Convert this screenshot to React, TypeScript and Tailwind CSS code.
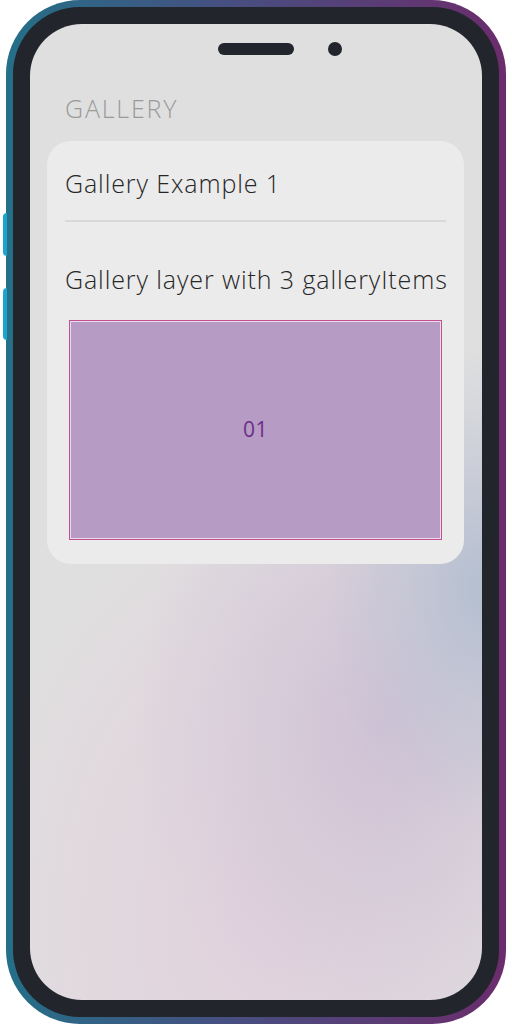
import React from "react";

const items = ["01"];

const Notch = () => (
  <div className="grid grid-cols-[1fr_auto_1fr] items-center pt-[18px]">
    <div />
    <div className="h-[12px] w-[76px] rounded-full bg-[#22252c]" />
    <div className="pl-[34px]">
      <div className="h-[14px] w-[14px] rounded-full bg-[#22252c]" />
    </div>
  </div>
);

const GalleryCard = () => (
  <div className="mx-[17px] mr-[18px] mt-[17px] rounded-[24px] bg-[#ebebeb] px-[18px] pb-[24px]">
    <div className="border-b-2 border-[#d9d9d9] pt-[26px] pb-[21px] text-[25px] font-light leading-[32px] tracking-[0.9px] text-[#262626]">
      Gallery Example 1
    </div>
    <div className="pt-[41px] pb-[25px] text-[25px] font-light leading-[32px] tracking-[0.9px] text-[#262626] whitespace-nowrap">
      Gallery layer with 3 galleryItems
    </div>
    <div className="mx-[4px] border border-[#c2508f] bg-[#eadcec] p-px">
      {items.map((item) => (
        <div
          key={item}
          className="flex h-[216px] items-center justify-center bg-[#b69bc4] text-[21px] tracking-[0.5px] text-[#6a2e8a]"
        >
          {item}
        </div>
      ))}
    </div>
  </div>
);

export default function App() {
  return (
    <div
      className="w-[512px] h-[1024px] bg-white"
      style={{ fontFamily: "'Open Sans', 'Noto Sans', sans-serif" }}
    >
      <div className="relative ml-[6px] h-[1024px] w-[500px] rounded-[74px] bg-[linear-gradient(to_right,#256f88,#474f80_45%,#6b2c6c)] p-[7px]">
        {/* side buttons */}
        <div className="absolute left-[-3px] top-[213px] h-[43px] w-[4px] rounded-l-sm bg-[#1aa6cc]" />
        <div className="absolute left-[-3px] top-[288px] h-[52px] w-[4px] rounded-l-sm bg-[#1aa6cc]" />
        <div className="h-full rounded-[67px] bg-[#22252c] p-[17px]">
          <div className="h-full overflow-hidden rounded-[52px] bg-[#dfdfdf] bg-[radial-gradient(ellipse_35%_25%_at_100%_58%,#b4bfd0_0%,rgba(185,193,210,0.55)_45%,transparent_100%),radial-gradient(ellipse_55%_35%_at_78%_72%,#cfc2d5_0%,rgba(210,198,215,0.6)_50%,transparent_100%),radial-gradient(ellipse_65%_45%_at_50%_92%,#e2d3dd_0%,rgba(226,211,221,0.6)_55%,transparent_100%)]">
            <Notch />
            <div className="px-[35px] pt-[36px] text-[25px] font-light leading-[32px] tracking-[1.8px] text-[#9a9a9a]">
              GALLERY
            </div>
            <GalleryCard />
          </div>
        </div>
      </div>
    </div>
  );
}
